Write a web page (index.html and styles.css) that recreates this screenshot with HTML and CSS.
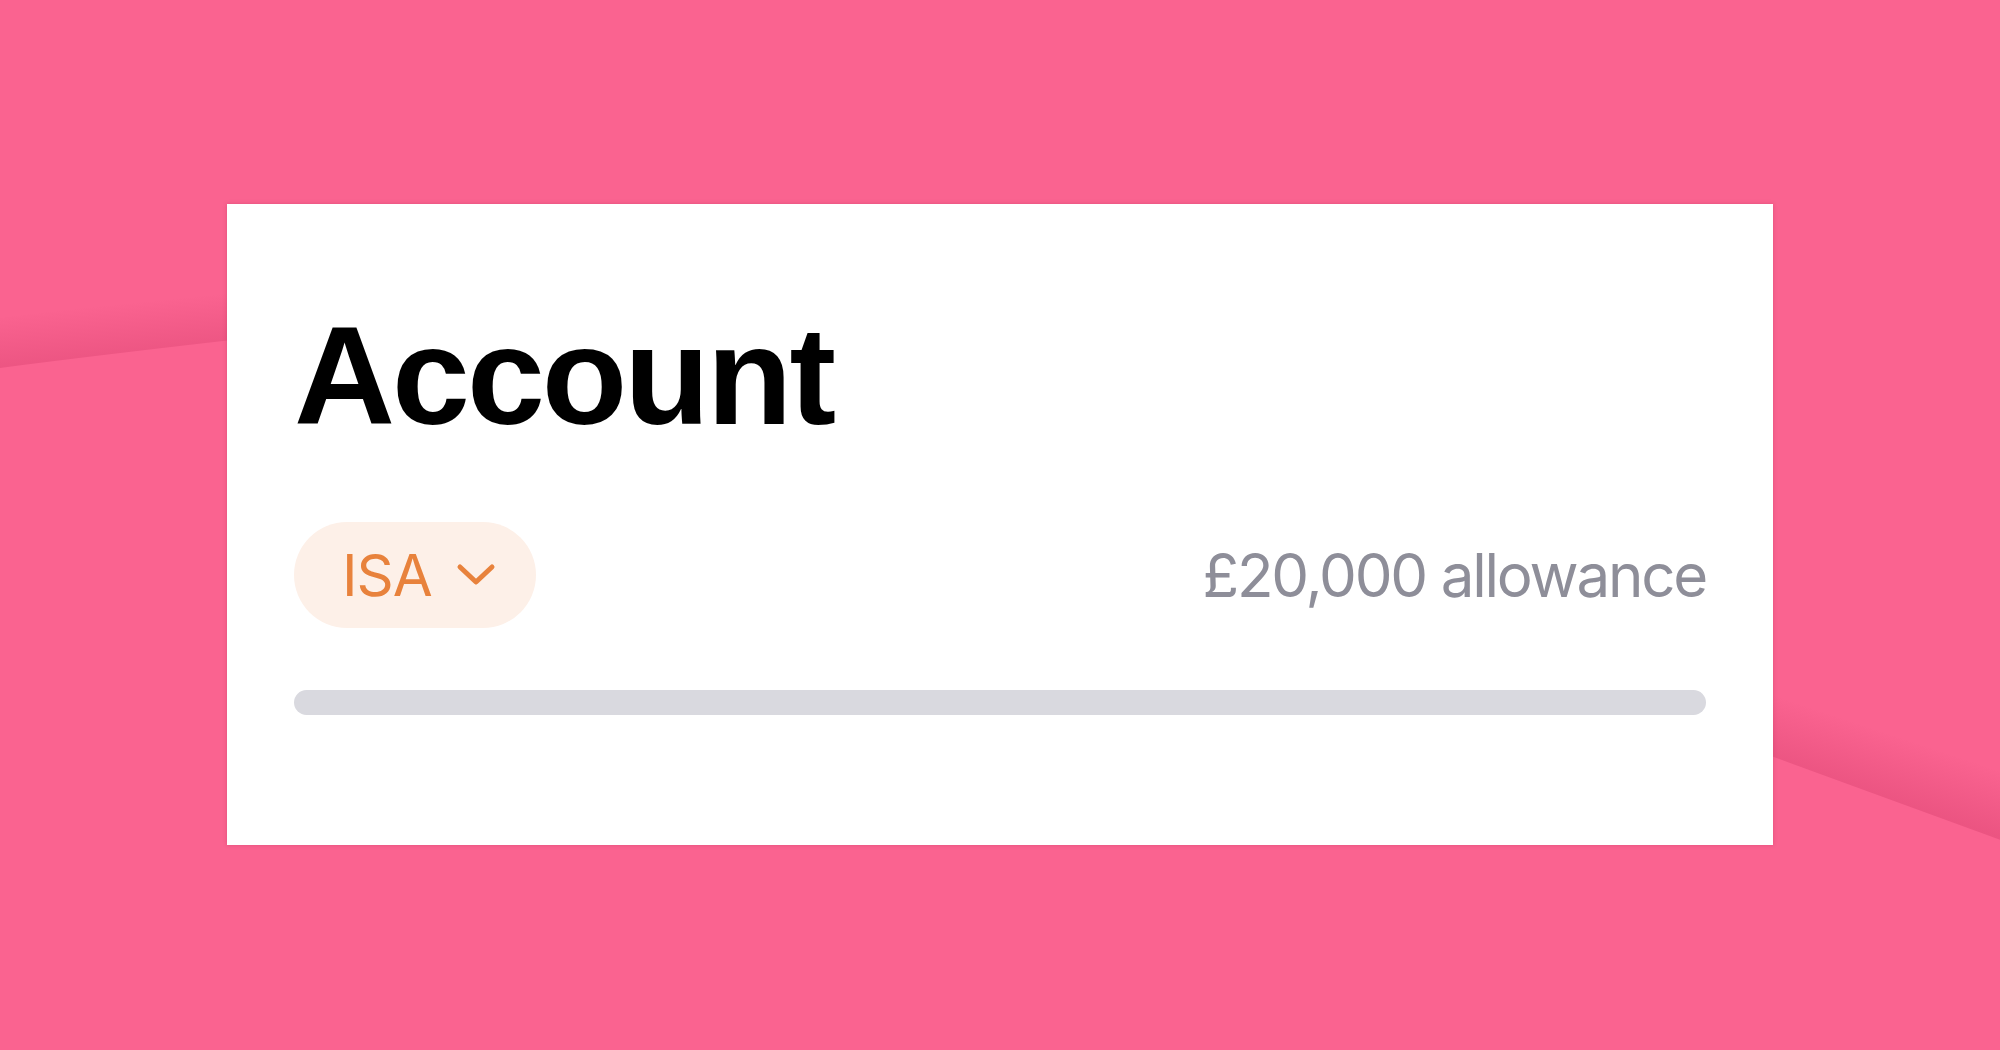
FILE: index.html
```html
<!DOCTYPE html>
<html lang="en">
<head>
  <meta charset="UTF-8" />
  <title>Account</title>
  <link rel="stylesheet" href="styles.css">
</head>
<body>
  <svg class="backdrop" width="2000" height="1050" viewBox="0 0 2000 1050">
    <defs>
      <linearGradient id="shade-left" gradientUnits="userSpaceOnUse" x1="105" y1="305" x2="110" y2="355">
        <stop offset="0" stop-color="#b8204f" stop-opacity="0" />
        <stop offset="1" stop-color="#b8204f" stop-opacity="0.2" />
      </linearGradient>
      <linearGradient id="shade-right" gradientUnits="userSpaceOnUse" x1="1910" y1="740" x2="1890" y2="800">
        <stop offset="0" stop-color="#b8204f" stop-opacity="0" />
        <stop offset="1" stop-color="#b8204f" stop-opacity="0.22" />
      </linearGradient>
    </defs>
    <path d="M0 368 Q 200 342 600 300 L 600 250 Q 200 292 0 318 Z" fill="url(#shade-left)" />
    <path d="M1500 657 L 2050 858 L 2050 790 L 1500 590 Z" fill="url(#shade-right)" />
  </svg>

  <div class="card">
    <h1 class="title">Account</h1>
    <div class="row">
      <button class="pill" type="button">
        <span>ISA</span>
        <svg class="chevron" width="40" height="24" viewBox="0 0 40 24">
          <polyline points="4,4 20,19 36,4" fill="none" stroke="#e8823c" stroke-width="5" stroke-linecap="round" stroke-linejoin="round" />
        </svg>
      </button>
      <span class="allowance">£20,000 allowance</span>
    </div>
    <div class="bar"></div>
  </div>
</body>
</html>
```

FILE: styles.css
```css
html, body { margin: 0; }
body {
  width: 2000px;
  height: 1050px;
  overflow: hidden;
  background: #fa6390;
  padding: 204px 0 0 227px;
  box-sizing: border-box;
  position: relative;
  font-family: Inter, "Liberation Sans", sans-serif;
}
.backdrop { position: absolute; left: 0; top: 0; }
.card {
  position: relative;
  width: 1546px;
  height: 641px;
  box-sizing: border-box;
  background: #fff;
  padding: 102px 67px 0;
  box-shadow: 0 0 4px rgba(150, 20, 60, 0.25);
}
.title {
  margin: 0;
  font-family: "Liberation Sans", Arial, sans-serif;
  font-weight: bold;
  font-size: 140px;
  line-height: 140px;
  letter-spacing: -3px;
  color: #000;
}
.row {
  display: flex;
  justify-content: space-between;
  align-items: center;
  margin-top: 76px;
}
.pill {
  display: inline-flex;
  align-items: center;
  gap: 24px;
  height: 106px;
  padding: 0 40px 0 48px;
  border: none;
  border-radius: 53px;
  background: #fdf0e8;
  color: #e8823c;
  font-family: Inter, sans-serif;
  font-size: 58px;
  font-weight: 400;
  letter-spacing: -1px;
}
.chevron { display: block; }
.allowance {
  color: #8e8e99;
  font-size: 60px;
  letter-spacing: -2.2px;
}
.bar {
  margin-top: 62px;
  height: 25px;
  border-radius: 13px;
  background: #d9d9df;
}
```
